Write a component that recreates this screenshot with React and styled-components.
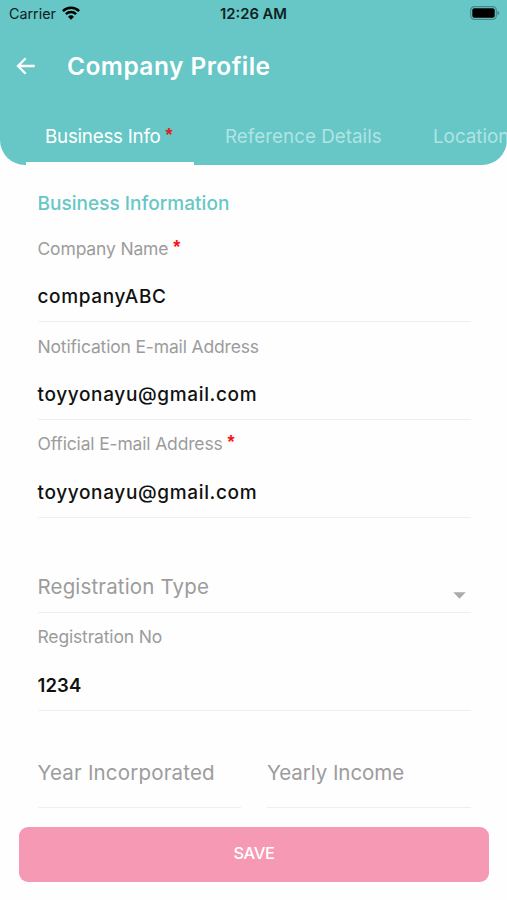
import React from 'react';
import styled, { createGlobalStyle } from 'styled-components';

const GlobalStyle = createGlobalStyle`
  * { box-sizing: border-box; }
  body { margin: 0; background: #fefefe; }
`;

const Screen = styled.div`
  width: 507px;
  height: 900px;
  display: flex;
  flex-direction: column;
  overflow: hidden;
  background: #fefefe;
  font-family: Inter, sans-serif;
`;

const Header = styled.header`
  height: 164.5px;
  flex: none;
  display: flex;
  flex-direction: column;
  background: #66c7c6;
  border-radius: 0 0 25px 25px;
  overflow: hidden;
`;

const StatusBar = styled.div`
  height: 28px;
  flex: none;
  display: grid;
  grid-template-columns: 1fr auto 1fr;
  align-items: center;
  padding: 0 7px 0 9px;
  color: #10201f;
  font-size: 14.3px;
`;

const Carrier = styled.div`
  display: flex;
  align-items: center;
  gap: 6px;
  line-height: 18px;

  svg {
    margin-bottom: 2px;
  }
`;

const Clock = styled.div`
  margin-right: 2px;
  font-size: 14.8px;
  font-weight: 600;
`;

const BatteryIcon = styled.svg`
  justify-self: end;
  margin-bottom: 2px;
`;

const Toolbar = styled.div`
  height: 76px;
  flex: none;
  display: flex;
  align-items: center;
  gap: 31px;
  padding-left: 16px;
`;

const BackButton = styled.button`
  display: flex;
  padding: 0;
  border: 0;
  background: none;
  color: #fff;
`;

const Title = styled.h1`
  margin: 0 0 1px;
  color: #fff;
  font-size: 24.5px;
  font-weight: 600;
  line-height: 32px;
  letter-spacing: 0.45px;
`;

const Tabs = styled.nav`
  flex: 1;
  display: flex;
  padding-left: 26px;
  white-space: nowrap;
`;

const Tab = styled.button`
  flex: none;
  width: ${(p) => p.$width}px;
  padding: 7px 0 0 ${(p) => p.$inset}px;
  border: 0;
  border-bottom: 3px solid ${(p) => (p.$active ? '#fefefe' : 'transparent')};
  background: none;
  color: ${(p) => (p.$active ? '#fff' : '#b0e4e4')};
  font: 400 18.8px Inter, sans-serif;
  letter-spacing: ${(p) => p.$spacing}px;
  text-align: left;
`;

const Form = styled.main`
  flex: 1;
  padding: 27.5px 36.5px 0 37.5px;
`;

const SectionTitle = styled.h2`
  margin: 0 0 8.7px;
  color: #66c7c6;
  font-size: 19px;
  font-weight: 500;
  line-height: 24px;
  letter-spacing: 0.03px;
`;

const Field = styled.div`
  height: 97.7px;
  padding-top: 12.2px;
  border-bottom: 1px solid #efefef;
`;

const Label = styled.div`
  color: #9c9c9c;
  font-size: 17.5px;
  line-height: 24px;
  letter-spacing: -0.16px;
`;

const Value = styled.div`
  margin-top: ${(p) => (p.$digits ? 23.2 : 24.3)}px;
  color: #111;
  font-size: ${(p) => (p.$digits ? 18.5 : 19)}px;
  font-weight: ${(p) => (p.$digits ? 600 : 500)};
  line-height: 24px;
  letter-spacing: ${(p) => (p.$digits ? 0.1 : 0.65)}px;
`;

const EmptyField = styled.div`
  flex: 1;
  height: ${(p) => p.$height}px;
  padding-top: ${(p) => p.$top}px;
  display: flex;
  justify-content: space-between;
  border-bottom: 1px solid #efefef;
  color: #9c9c9c;
  font-size: 20.5px;
  line-height: 26px;
  letter-spacing: ${(p) => p.$spacing}px;
`;

const SelectArrow = styled.svg`
  margin: 18px 5px 0 0;
`;

const FieldRow = styled.div`
  display: flex;
  gap: 26px;
`;

const Required = styled.span`
  margin-left: 5px;
  color: ${(p) => p.$color || '#fb1414'};
  font-family: 'Liberation Sans', Arial, sans-serif;
  font-size: 18px;
  font-weight: 700;
  line-height: 1;
  letter-spacing: 0;
  vertical-align: 2px;
`;

const Footer = styled.footer`
  flex: none;
  padding: 0 18px 18.5px 19px;
`;

const SaveButton = styled.button`
  display: block;
  width: 100%;
  height: 55px;
  padding: 0 0 2px;
  border: 0;
  border-radius: 9px;
  background: #f699b4;
  color: #fff;
  font: 500 16.5px Inter, sans-serif;
  letter-spacing: -0.4px;
`;

const Star = ({ color }) => <Required $color={color}>*</Required>;

const TextField = ({ label, value, required, digits }) => (
  <Field>
    <Label>
      {label}
      {required && <Star />}
    </Label>
    <Value $digits={digits}>{value}</Value>
  </Field>
);

export default function App() {
  return (
    <Screen>
      <GlobalStyle />
      <Header>
        <StatusBar>
          <Carrier>
            Carrier
            <svg width="18" height="14" viewBox="0 0 18 14" fill="none" stroke="#000" strokeWidth="2.5">
              <path d="M0.9 5.1a11.5 11.5 0 0 1 16.2 0" />
              <path d="M3.9 8.2a7.3 7.3 0 0 1 10.2 0" />
              <path d="M9 13.8L6 10.8a4.3 4.3 0 0 1 6 0z" fill="#000" stroke="none" />
            </svg>
          </Carrier>
          <Clock>12:26 AM</Clock>
          <BatteryIcon width="30" height="14" viewBox="0 0 30 14">
            <rect x="0.7" y="0.7" width="25.6" height="12.6" rx="3.6" fill="none" stroke="#458887" strokeWidth="1.2" />
            <rect x="2.3" y="2.3" width="22.4" height="9.4" rx="2" fill="#000" />
            <path d="M27.5 4.7c2.4 1 2.4 3.6 0 4.6z" fill="#458887" />
          </BatteryIcon>
        </StatusBar>
        <Toolbar>
          <BackButton aria-label="Back">
            <svg width="20" height="18" viewBox="0 0 20 18" fill="none" stroke="currentColor" strokeWidth="2.3">
              <path d="M18.7 9H2.3M9.7 1.2L2 9l7.7 7.8" />
            </svg>
          </BackButton>
          <Title>Company Profile</Title>
        </Toolbar>
        <Tabs>
          <Tab $active $width={168} $inset={19} $spacing={-0.25}>
            Business Info
            <Star color="#d91f26" />
          </Tab>
          <Tab $width={208} $inset={31} $spacing={0.03}>Reference Details</Tab>
          <Tab $width={140} $inset={31} $spacing={0}>Location</Tab>
        </Tabs>
      </Header>
      <Form>
        <SectionTitle>Business Information</SectionTitle>
        <TextField label="Company Name" value="companyABC" required />
        <TextField label="Notification E-mail Address" value="toyyonayu@gmail.com" />
        <TextField label="Official E-mail Address" value="toyyonayu@gmail.com" required />
        <EmptyField $height={95.4} $top={56.5} $spacing={0.15}>
          Registration Type
          <SelectArrow width="13" height="7" viewBox="0 0 13 7">
            <path d="M0.3 0.3h12.4L6.5 6.7z" fill="#ababab" />
          </SelectArrow>
        </EmptyField>
        <TextField label="Registration No" value="1234" digits />
        <FieldRow>
          <EmptyField $height={97.3} $top={49.3} $spacing={0.18}>Year Incorporated</EmptyField>
          <EmptyField $height={97.3} $top={49.3} $spacing={-0.07}>Yearly Income</EmptyField>
        </FieldRow>
      </Form>
      <Footer>
        <SaveButton>SAVE</SaveButton>
      </Footer>
    </Screen>
  );
}
